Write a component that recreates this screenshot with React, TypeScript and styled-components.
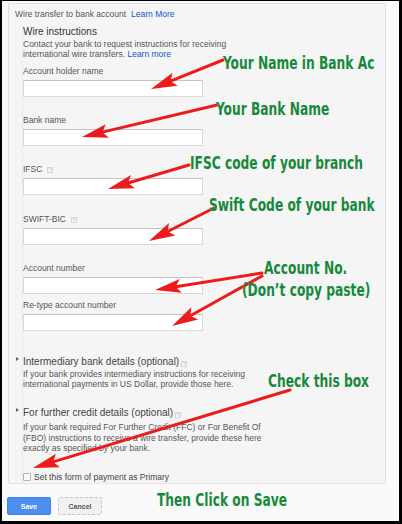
import React from 'react'
import styled, { createGlobalStyle } from 'styled-components'

const GlobalStyle = createGlobalStyle`
  html, body {
    margin: 0;
    padding: 0;
    background: #fff;
  }
  body {
    font-family: "Liberation Sans", Arial, sans-serif;
  }
`

const Shell = styled.div`
  position: relative;
  box-sizing: border-box;
  width: 402px;
  height: 524px;
  border-style: solid;
  border-color: #000;
  border-width: 1px 3px 3px 2px;
  background: #fafafa;
  overflow: hidden;
`

const Panel = styled.div`
  box-sizing: border-box;
  margin: 2px 0 0 6px;
  width: 378px;
  height: 481px;
  padding: 5px 0 0 6px;
  border: 1px solid #e0e0e0;
  border-radius: 2px;
  background: #f5f5f5;
`

const Header = styled.div`
  font-size: 8.5px;
  line-height: 10px;
  color: #555;
`

const Link = styled.a`
  color: #15c;
  text-decoration: none;
  margin-left: ${({ $gap }: { $gap?: number }) => $gap ?? 0}px;
`

const Section = styled.div`
  margin: 7px 0 0 7px;
  height: 457px;
  border-left: 1px solid #ebebeb;
  border-bottom: 1px solid #e6e6e6;
`

const Title = styled.div`
  font-size: 10px;
  line-height: 12px;
  color: #333;
`

const Text = styled.div<{ $top?: number; $lh?: number }>`
  margin-top: ${({ $top }) => $top ?? 1}px;
  font-size: 8.5px;
  line-height: ${({ $lh }) => $lh ?? 10}px;
  color: #555;
`

const Field = styled.div<{ $top: number }>`
  margin-top: ${({ $top }) => $top}px;
`

const Label = styled.div`
  font-size: 8.5px;
  line-height: 10px;
  color: #555;
  display: flex;
  align-items: center;
`

const Hint = styled.span<{ $gap?: number; $drop?: number }>`
  display: inline-flex;
  align-items: center;
  justify-content: center;
  box-sizing: border-box;
  width: 6px;
  height: 6px;
  margin-left: ${({ $gap }) => $gap ?? 5}px;
  position: relative;
  top: ${({ $drop }) => $drop ?? 1}px;
  border: 1px solid #d6d6d6;
  font-size: 4px;
  line-height: 1;
  color: #aaa;
  background: #f3f3f3;
`

const Input = styled.div`
  box-sizing: border-box;
  width: 180px;
  height: 17px;
  margin-top: 4px;
  background: #fff;
  border: 1px solid #d9d9d9;
  border-top-color: #c4c4c4;
`

const Optional = styled.div<{ $top: number }>`
  position: relative;
  margin-top: ${({ $top }) => $top}px;
  font-size: 10px;
  line-height: 12px;
  color: #444;
  display: flex;
  align-items: center;

  &::before {
    content: '';
    position: absolute;
    left: -7px;
    top: 1px;
    border-style: solid;
    border-width: 2px 0 2px 3px;
    border-color: transparent transparent transparent #666;
  }
`

const CheckRow = styled.label`
  display: flex;
  align-items: center;
  gap: 3px;
  margin-top: 18px;
  font-size: 8.5px;
  line-height: 10px;
  color: #444;
`

const Box = styled.span`
  box-sizing: border-box;
  width: 8px;
  height: 8px;
  border: 1px solid #b5b5b5;
  border-radius: 1px;
  background: #fbfbfb;
`

const Buttons = styled.div`
  display: flex;
  gap: 7px;
  margin: 13px 0 0 5px;
`

const Button = styled.button<{ $primary?: boolean }>`
  box-sizing: border-box;
  width: 44px;
  height: 18px;
  padding: 0;
  border-radius: 2px;
  font-family: "Liberation Sans", Arial, sans-serif;
  font-size: 7px;
  font-weight: bold;
  color: ${({ $primary }) => ($primary ? '#fff' : '#555')};
  background: ${({ $primary }) => ($primary ? '#4d8ff0' : '#f1f1f1')};
  border: 1px ${({ $primary }) => ($primary ? 'solid #3f82e8' : 'dashed #c6c6c6')};
`

const Overlay = styled.div`
  position: absolute;
  left: -2px;
  top: -1px;
  width: 402px;
  height: 524px;
  pointer-events: none;
`

const Arrows = styled.svg`
  position: absolute;
  inset: 0;
`

const Note = styled.span<{ $x: number; $y: number }>`
  position: absolute;
  left: ${({ $x }) => $x}px;
  top: ${({ $y }) => $y}px;
  white-space: nowrap;
  font-family: "DejaVu Sans Condensed", "DejaVu Sans", sans-serif;
  font-stretch: condensed;
  font-weight: bold;
  font-size: 17px;
  line-height: 17px;
  color: #17893a;
  transform: scaleX(0.8);
  transform-origin: left top;
`

type Pt = { x1: number; y1: number; x2: number; y2: number }

const arrows: Pt[] = [
  { x1: 223, y1: 60, x2: 151, y2: 89 },
  { x1: 217, y1: 105, x2: 82, y2: 137 },
  { x1: 189, y1: 165, x2: 108, y2: 189 },
  { x1: 214, y1: 208, x2: 149, y2: 241 },
  { x1: 262, y1: 273, x2: 155, y2: 290 },
  { x1: 262, y1: 276, x2: 172, y2: 326 },
  { x1: 290, y1: 390, x2: 33, y2: 468 },
]

const notes = [
  { x: 223, y: 55, text: 'Your Name in Bank Ac' },
  { x: 216, y: 101, text: 'Your Bank Name' },
  { x: 190, y: 155, text: 'IFSC code of your branch' },
  { x: 209, y: 197, text: 'Swift Code of your bank' },
  { x: 264, y: 260, text: 'Account No.' },
  { x: 242, y: 282, text: '(Don’t copy paste)' },
  { x: 268, y: 373, text: 'Check this box' },
  { x: 157, y: 492, text: 'Then Click on Save' },
]

const Arrow = ({ x1, y1, x2, y2 }: Pt) => {
  const len = Math.hypot(x2 - x1, y2 - y1)
  const ux = (x2 - x1) / len
  const uy = (y2 - y1) / len
  const head = 26
  const half = 7
  const bx = x2 - ux * head
  const by = y2 - uy * head
  const nx = bx + ux * 5
  const ny = by + uy * 5
  const pts = [
    [x2, y2],
    [bx - uy * half, by + ux * half],
    [nx, ny],
    [bx + uy * half, by - ux * half],
  ]
  return (
    <g>
      <line x1={x1} y1={y1} x2={nx} y2={ny} stroke="#ec1c1c" strokeWidth={3} strokeLinecap="round" />
      <polygon points={pts.map((p) => p.join(',')).join(' ')} fill="#ec1c1c" />
    </g>
  )
}

const fields = [
  { label: 'Account holder name', top: 7 },
  { label: 'Bank name', top: 18 },
  { label: 'IFSC', top: 18, hint: true },
  { label: 'SWIFT-BIC', top: 19, hint: true },
  { label: 'Account number', top: 18 },
  { label: 'Re-type account number', top: 6 },
]

export default function App() {
  return (
    <>
      <GlobalStyle />
      <Shell>
        <Panel>
          <Header>
            Wire transfer to bank account<Link href="#" $gap={5}>Learn More</Link>
          </Header>
          <Section>
            <Title>Wire instructions</Title>
            <Text>
              Contact your bank to request instructions for receiving
              <br />
              international wire transfers. <Link href="#">Learn more</Link>
            </Text>

            {fields.map((f) => (
              <Field key={f.label} $top={f.top}>
                <Label>
                  {f.label}
                  {f.hint && <Hint>?</Hint>}
                </Label>
                <Input />
              </Field>
            ))}

            <Optional $top={25}>
              Intermediary bank details (optional)
              <Hint $gap={2} $drop={2}>?</Hint>
            </Optional>
            <Text>
              If your bank provides intermediary instructions for receiving
              <br />
              international payments in US Dollar, provide those here.
            </Text>

            <Optional $top={18}>
              For further credit details (optional)
              <Hint $gap={2} $drop={2}>?</Hint>
            </Optional>
            <Text $top={3} $lh={10.5}>
              If your bank required For Further Credit (FFC) or For Benefit Of
              <br />
              (FBO) instructions to receive a wire transfer, provide these here
              <br />
              exactly as specified by your bank.
            </Text>

            <CheckRow>
              <Box />
              Set this form of payment as Primary
            </CheckRow>
          </Section>
        </Panel>

        <Buttons>
          <Button $primary>Save</Button>
          <Button>Cancel</Button>
        </Buttons>

        <Overlay>
          <Arrows width="402" height="524" viewBox="0 0 402 524">
            {arrows.map((a, i) => (
              <Arrow key={i} {...a} />
            ))}
          </Arrows>
          {notes.map((n) => (
            <Note key={n.text} $x={n.x} $y={n.y}>
              {n.text}
            </Note>
          ))}
        </Overlay>
      </Shell>
    </>
  )
}
